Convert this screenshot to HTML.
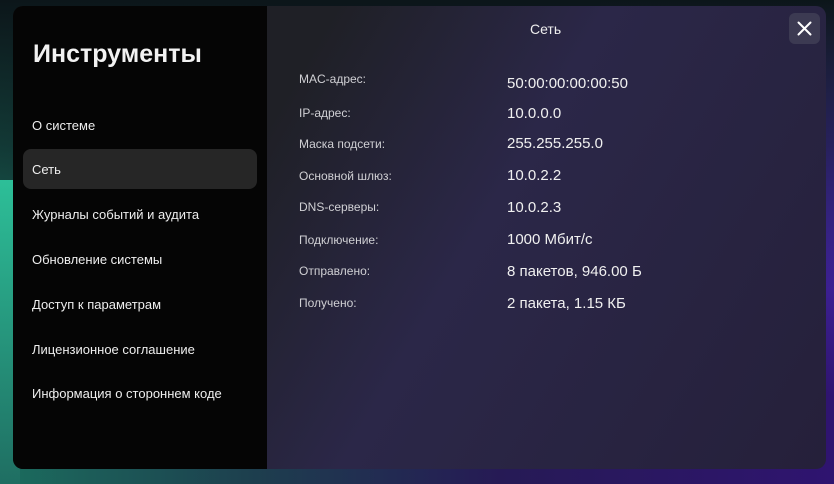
<!DOCTYPE html>
<html><head><meta charset="utf-8"><style>
*{margin:0;padding:0;box-sizing:border-box}
body{width:834px;height:484px;overflow:hidden;position:relative;font-family:"Liberation Sans",sans-serif;
background:linear-gradient(90deg,#1b6d5e 0%,#1d3f4e 30%,#261a55 60%,#2f1470 100%);}
.bgtop{position:absolute;left:0;top:0;width:834px;height:484px;background:linear-gradient(180deg,rgba(12,22,26,1) 0%,rgba(12,22,26,0.6) 30%,rgba(12,22,26,0) 60%)}
.bgright{position:absolute;left:600px;top:0;width:234px;height:484px;background:linear-gradient(200deg,#6a4ee0 0%,#4a2cb8 30%,rgba(47,20,112,0) 70%)}
.bgleft{position:absolute;left:0;top:180px;width:20px;height:304px;background:linear-gradient(180deg,#2dbf98,#1f6e62)}
.modal{position:absolute;left:13px;top:6px;width:813px;height:463px;border-radius:10px;overflow:hidden;background:linear-gradient(120deg,#1f2026 30%,#2b2748 55%,#25203a 100%)}
.side{position:absolute;left:0;top:0;width:254px;height:463px;background:#050505}
h1{position:absolute;left:20px;top:34px;font-size:25px;font-weight:bold;color:#f2f2f2}
.it{position:absolute;left:19px;font-size:13px;color:#eee}
.sel{position:absolute;left:10px;top:143px;width:234px;height:40px;border-radius:8px;background:#262626}
.hd{position:absolute;left:517px;top:15px;font-size:14px;color:#eee}
.x{position:absolute;left:776px;top:7px;width:31px;height:31px;border-radius:6px;background:#3c3a52}
.l{position:absolute;left:286px;font-size:12px;color:#d0d0d4}
.v{position:absolute;left:494px;font-size:15px;color:#f0f0f0}
</style></head><body>
<div class="bgright"></div><div class="bgtop"></div><div class="bgleft"></div>
<div class="modal">
<div class="side"></div>
<h1>Инструменты</h1>
<div class="sel"></div>
<div class="it" style="top:112px">О системе</div>
<div class="it" style="top:156px">Сеть</div>
<div class="it" style="top:201px">Журналы событий и аудита</div>
<div class="it" style="top:246px">Обновление системы</div>
<div class="it" style="top:291px">Доступ к параметрам</div>
<div class="it" style="top:336px">Лицензионное соглашение</div>
<div class="it" style="top:380px">Информация о стороннем коде</div>
<div class="hd">Сеть</div>
<div class="x"><svg width="31" height="31" viewBox="0 0 31 31"><path d="M9.5 9.5L21.5 21.5M21.5 9.5L9.5 21.5" stroke="#fff" stroke-width="2" stroke-linecap="round"/></svg></div>
<div class="l" style="top:66px">MAC-адрес:</div><div class="v" style="top:69px">50:00:00:00:00:50</div>
<div class="l" style="top:100px">IP-адрес:</div><div class="v" style="top:99px">10.0.0.0</div>
<div class="l" style="top:131px">Маска подсети:</div><div class="v" style="top:129px">255.255.255.0</div>
<div class="l" style="top:163px">Основной шлюз:</div><div class="v" style="top:161px">10.0.2.2</div>
<div class="l" style="top:194px">DNS-серверы:</div><div class="v" style="top:193px">10.0.2.3</div>
<div class="l" style="top:227px">Подключение:</div><div class="v" style="top:225px">1000 Мбит/с</div>
<div class="l" style="top:258px">Отправлено:</div><div class="v" style="top:257px">8 пакетов, 946.00 Б</div>
<div class="l" style="top:290px">Получено:</div><div class="v" style="top:289px">2 пакета, 1.15 КБ</div>
</div>
</body></html>
